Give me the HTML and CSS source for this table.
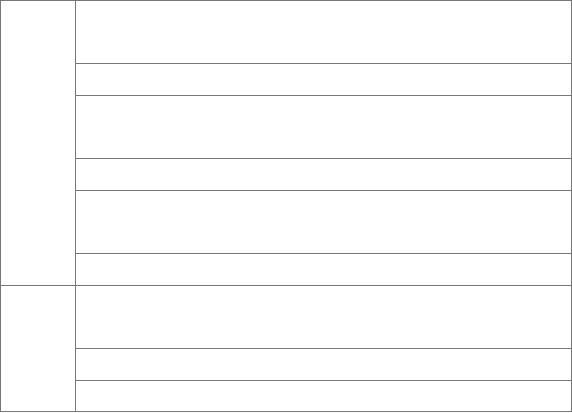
FILE: index.html
```html
<!DOCTYPE html>
<html>
<head>
<meta charset="utf-8">
<link rel="stylesheet" href="styles.css">
</head>
<body>
<div class="grid">
  <div class="cell group g1"></div>
  <div class="cell tall"></div>
  <div class="cell short"></div>
  <div class="cell tall"></div>
  <div class="cell short"></div>
  <div class="cell tall"></div>
  <div class="cell short"></div>
  <div class="cell group g2"></div>
  <div class="cell tall"></div>
  <div class="cell short"></div>
  <div class="cell last"></div>
</div>
</body>
</html>
```
FILE: styles.css
```css
html, body {
  margin: 0;
  padding: 0;
  background: #fff;
  font-family: "Liberation Sans", Arial, sans-serif;
}
.grid {
  display: grid;
  width: 572px;
  box-sizing: border-box;
  grid-template-columns: 75px 496px;
  grid-template-rows: 63px 32px 63px 32px 63px 32px 63px 32px 31px;
  border-top: 1px solid #777;
  border-left: 1px solid #777;
}
.cell {
  border-right: 1px solid #777;
  border-bottom: 1px solid #777;
  box-sizing: border-box;
}
.tall, .short, .last {
  grid-column: 2;
}
.g1 {
  grid-column: 1;
  grid-row: 1 / span 6;
}
.g2 {
  grid-column: 1;
  grid-row: 7 / span 3;
}
```
